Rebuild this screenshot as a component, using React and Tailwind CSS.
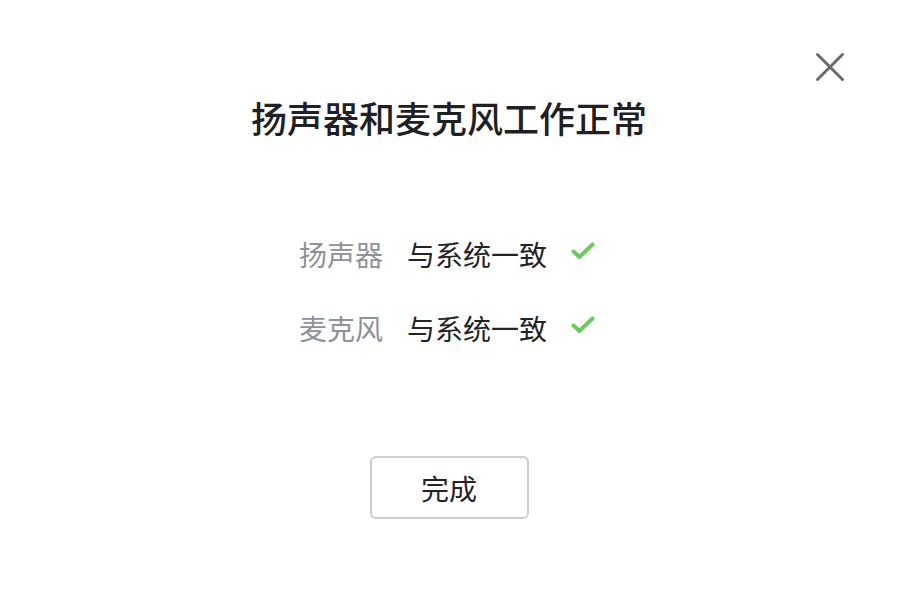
import React from 'react'

const CJK = { fontFamily: '"Noto Sans CJK SC", "Noto Sans", sans-serif' }

function Check() {
  return (
    <svg width="24" height="18" viewBox="0 0 24 18" fill="none">
      <path d="M2.5 9.5 L8.5 15 L21.5 2.5" stroke="#6cc862" strokeWidth="4" strokeLinecap="round" strokeLinejoin="round" />
    </svg>
  )
}

function Row({ label, value }) {
  return (
    <div className="flex items-center h-[40px]">
      <span className="text-[28px] text-[#8e9199] leading-none w-[108px]">{label}</span>
      <span className="text-[28px] text-[#222326] leading-none">{value}</span>
      <span className="ml-[24px] -mt-[6px]"><Check /></span>
    </div>
  )
}

export default function App() {
  return (
    <div className="w-[898px] h-[616px] bg-white rounded-[6px] relative overflow-hidden" style={CJK}>
      <button className="absolute left-[814px] top-[51px] w-[32px] h-[32px] flex items-center justify-center">
        <svg width="32" height="32" viewBox="0 0 32 32" fill="none">
          <path d="M3.5 3.5 L28.5 28.5 M28.5 3.5 L3.5 28.5" stroke="#676b73" strokeWidth="3" strokeLinecap="round" />
        </svg>
      </button>

      <div className="flex flex-col items-center">
        <h1 className="mt-[94px] text-[36px] leading-[46px] font-medium text-[#1f2023]">扬声器和麦克风工作正常</h1>

        <div className="mt-[94px] flex flex-col gap-[34px] pr-[4px]">
          <Row label="扬声器" value="与系统一致" />
          <Row label="麦克风" value="与系统一致" />
        </div>

        <button className="mt-[108px] w-[159px] h-[63px] border-2 border-[#cdcdcf] rounded-[6px] text-[28px] text-[#222326] flex items-center justify-center">
          完成
        </button>
      </div>
    </div>
  )
}
